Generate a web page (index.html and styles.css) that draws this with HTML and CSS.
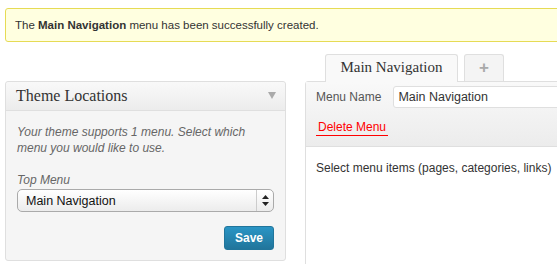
FILE: index.html
```html
<!DOCTYPE html>
<html lang="en">
<head>
    <meta charset="UTF-8">
    <title>Menus</title>
    <link rel="stylesheet" href="styles.css">
</head>
<body>
    <div class="notice">
        <p>The <strong>Main Navigation</strong> menu has been successfully created.</p>
    </div>
    <div class="columns">
        <div class="side">
            <div class="postbox">
                <div class="postbox-head">
                    <h3>Theme Locations</h3>
                    <svg class="toggle" width="8" height="7" viewBox="0 0 8 7"><path d="M0 0 L8 0 L4 7 Z" fill="#aaa"/></svg>
                </div>
                <div class="postbox-body">
                    <p class="howto">Your theme supports 1 menu. Select which menu you would like to use.</p>
                    <label class="howto">Top Menu</label>
                    <div class="select">
                        <span class="select-value">Main Navigation</span>
                        <span class="select-arrows">
                            <svg width="7" height="11" viewBox="0 0 7 11"><path d="M3.5 0 L7 4 L0 4 Z M0 7 L7 7 L3.5 11 Z" fill="#222"/></svg>
                        </span>
                    </div>
                    <div class="actions">
                        <button class="button-primary">Save</button>
                    </div>
                </div>
            </div>
        </div>
        <div class="main">
            <div class="tabs">
                <span class="tab active">Main Navigation</span>
                <span class="tab add">+</span>
            </div>
            <div class="menu-edit">
                <div class="menu-head">
                    <div class="name-row">
                        <label for="menu_name">Menu Name</label>
                        <input type="text" id="menu_name" value="Main Navigation">
                    </div>
                    <a class="delete" href="#">Delete Menu</a>
                </div>
                <div class="menu-body">
                    <p>Select menu items (pages, categories, links)</p>
                </div>
            </div>
        </div>
    </div>
</body>
</html>
```

FILE: styles.css
```css
body {
    margin: 0;
    padding: 8px 0 0 5px;
    font-family: "Liberation Sans", Arial, sans-serif;
    font-size: 12px;
    color: #333;
    background-color: #fff;
    overflow: hidden;
}
.notice {
    background-color: #ffffe0;
    border: 1px solid #e6db55;
    border-radius: 3px;
    margin-right: -20px;
    height: 32px;
    display: flex;
    align-items: center;
    padding-left: 9px;
}
.notice p {
    margin: 0;
    font-size: 11.5px;
    color: #333;
}
.columns {
    display: flex;
    margin-top: 12px;
    gap: 19px;
}
.side {
    width: 281px;
    flex-shrink: 0;
    padding-top: 27px;
}
.postbox {
    border: 1px solid #dfdfdf;
    border-radius: 3px;
    background-color: #f5f5f5;
}
.postbox-head {
    height: 28px;
    display: flex;
    align-items: center;
    justify-content: space-between;
    padding: 0 9px 0 10px;
    border-bottom: 1px solid #dfdfdf;
    background: linear-gradient(#f9f9f9, #ececec);
    border-radius: 3px 3px 0 0;
}
.postbox-head h3 {
    margin: 0;
    font-family: "Liberation Serif", "Times New Roman", serif;
    font-size: 16px;
    font-weight: normal;
    color: #333;
}
.toggle {
    margin-top: -2px;
}
.postbox-body {
    padding: 13px 11px 10px;
}
.howto {
    font-style: italic;
    color: #666;
    line-height: 16px;
    display: block;
}
p.howto {
    margin: 0 0 16px;
}
.select {
    margin-top: 1px;
    height: 21px;
    border: 1px solid #aaa;
    border-radius: 5px;
    background: linear-gradient(#fff, #ececec);
    display: flex;
    align-items: center;
    justify-content: space-between;
    color: #111;
}
.select-value {
    padding-left: 8px;
    font-size: 12.5px;
}
.select-arrows {
    width: 16px;
    height: 100%;
    border-left: 1px solid #ccc;
    display: flex;
    align-items: center;
    justify-content: center;
}
.actions {
    display: flex;
    justify-content: flex-end;
    margin-top: 14px;
}
.button-primary {
    width: 50px;
    height: 24px;
    border: 1px solid #21759b;
    border-radius: 3px;
    background: linear-gradient(#2a95c5, #21759b);
    color: #fff;
    font-family: "Liberation Sans", Arial, sans-serif;
    font-size: 12px;
    font-weight: bold;
    padding: 0;
    cursor: pointer;
}
.main {
    width: 400px;
    flex-shrink: 0;
}
.tabs {
    display: flex;
    gap: 6px;
    padding-left: 20px;
    height: 27px;
    position: relative;
    z-index: 1;
}
.tab {
    border: 1px solid #dfdfdf;
    border-bottom: none;
    border-radius: 3px 3px 0 0;
    display: flex;
    align-items: center;
    justify-content: center;
    box-sizing: border-box;
}
.tab.active {
    width: 133px;
    height: 28px;
    background-color: #f9f9f9;
    font-family: "Liberation Serif", "Times New Roman", serif;
    font-size: 15px;
    color: #333;
    padding-bottom: 2px;
}
.tab.add {
    width: 40px;
    height: 27px;
    background-color: #f4f4f4;
    color: #aaa;
    font-size: 17px;
    font-weight: bold;
}
.menu-edit {
    border: 1px solid #dfdfdf;
    border-radius: 3px 0 0 0;
    height: 200px;
    background-color: #fff;
}
.menu-head {
    background: linear-gradient(#f9f9f9, #ececec);
    border-bottom: 1px solid #dfdfdf;
    padding: 4px 10px 10px;
}
.name-row {
    display: flex;
    align-items: center;
    gap: 12px;
}
.name-row label {
    color: #555;
    white-space: nowrap;
    flex-shrink: 0;
}
.name-row input {
    width: 300px;
    height: 22px;
    flex-shrink: 0;
    box-sizing: border-box;
    border: 1px solid #dfdfdf;
    border-radius: 3px;
    padding: 0 4px;
    font-family: "Liberation Sans", Arial, sans-serif;
    font-size: 12.5px;
    color: #333;
}
.delete {
    display: inline-block;
    margin-top: 11px;
    padding: 0 2px;
    color: #f00;
    text-decoration: none;
    line-height: 16px;
    border-bottom: 1px solid #f00;
}
.menu-body {
    padding: 13px 10px;
}
.menu-body p {
    margin: 0;
    line-height: 16px;
    white-space: nowrap;
}
```
